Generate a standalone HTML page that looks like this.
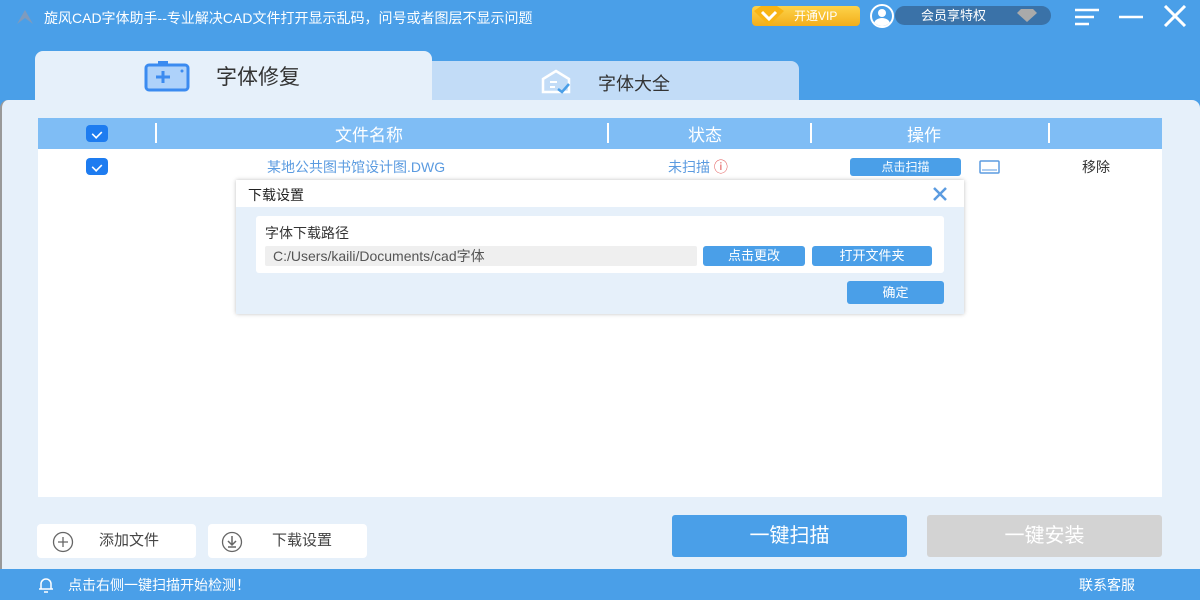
<!DOCTYPE html>
<html><head><meta charset="utf-8"><style>
*{margin:0;padding:0;box-sizing:border-box}
body{width:1200px;height:600px;overflow:hidden;background:#4a9fe8;font-family:"Liberation Sans","Noto Sans CJK SC",sans-serif;position:relative}
.a{position:absolute}
.title{left:44px;top:8px;color:#fff;font-size:14px}
.panel{left:0;top:100px;width:1200px;height:469px;background:#e6f0fa;border-radius:8px 8px 0 0;border-left:2px solid #999}
.tab1{left:35px;top:51px;width:397px;height:52px;background:#e6f0fa;border-radius:8px 8px 0 0}
.tab2{left:432px;top:61px;width:367px;height:39px;background:#c2dcf7;border-radius:0 8px 0 0}
.table{left:38px;top:118px;width:1124px;height:379px;background:#fff}
.thead{left:38px;top:118px;width:1124px;height:31px;background:#7fbdf5;color:#fff;font-size:17px}
.cb{width:22px;height:17px;background:#1e7cf0;border-radius:4px}
.cb:after{content:"";position:absolute;left:7px;top:3px;width:6px;height:9px;border:solid #fff;border-width:0 2px 2px 0;transform:rotate(45deg) scale(.8)}
.sep{width:2px;height:20px;background:#fff;top:5px}
.btn{background:#4a9fe8;color:#fff;border-radius:3px;text-align:center}
.foot{left:0;top:569px;width:1200px;height:31px;background:#4a9fe8;color:#fff;font-size:14px}
</style></head><body>
<svg class="a" style="left:15px;top:9px" width="20" height="16"><path d="M2 15L10 1L18 15L10 9Z" fill="#7f9bbd"/></svg>
<div class="a title">旋风CAD字体助手--专业解决CAD文件打开显示乱码，问号或者图层不显示问题</div>
<div class="a" style="left:752px;top:6px;width:108px;height:20px;background:linear-gradient(#fdd34a,#f3ae1b);border-radius:4px;color:#fff;font-size:12px;line-height:20px;padding-left:42px">开通VIP</div>
<svg class="a" style="left:752px;top:5px" width="34" height="22"><path d="M2 6L9 1L25 1L32 6L17 21Z" fill="#f8b414"/><path d="M10 7L17 14L24 7" stroke="#fff" stroke-width="3" fill="none"/></svg>
<div class="a" style="left:895px;top:6px;width:156px;height:19px;background:#3a72a8;border-radius:10px;color:#fff;font-size:13px;line-height:19px;padding-left:26px">会员享特权</div>
<svg class="a" style="left:1016px;top:9px" width="22" height="14"><path d="M1 4L5 0L17 0L21 4L11 13Z" fill="#aaa"/></svg>
<div class="a" style="left:870px;top:4px;width:24px;height:24px;border:2px solid #fff;border-radius:50%;background:#4a9fe8;overflow:hidden"><div class="a" style="left:6px;top:3px;width:8px;height:8px;border-radius:50%;background:#fff"></div><div class="a" style="left:2px;top:12px;width:16px;height:12px;border-radius:50%;background:#fff"></div></div>
<svg class="a" style="left:1074px;top:8px" width="26" height="18" stroke="#fff" stroke-width="2.5"><path d="M1 2H25M1 9H20M1 16H15"/></svg>
<svg class="a" style="left:1118px;top:8px" width="26" height="18" stroke="#fff" stroke-width="2.5"><path d="M1 9H25"/></svg>
<svg class="a" style="left:1163px;top:5px" width="24" height="22" stroke="#fff" stroke-width="3"><path d="M2 1L22 21M22 1L2 21"/></svg>
<div class="a panel"></div>
<div class="a tab2"></div>
<div class="a tab1"></div>
<svg class="a" style="left:144px;top:60px" width="48" height="32"><rect x="2" y="5" width="42" height="25" rx="3" fill="#aed2fa" stroke="#3b8bf0" stroke-width="3"/><rect x="14" y="1" width="10" height="3" fill="#3b8bf0"/><path d="M12 17H26M19 11V23" stroke="#3b8bf0" stroke-width="3"/><circle cx="38" cy="11" r="1.5" fill="#3b8bf0"/></svg>
<div class="a" style="left:216px;top:61px;font-size:21px;color:#333">字体修复</div>
<svg class="a" style="left:540px;top:69px" width="34" height="26"><path d="M3 10L16 2L29 10V23H3Z" fill="none" stroke="#fff" stroke-width="2.5"/><path d="M10 13H17M10 18H15" stroke="#fff" stroke-width="2"/><path d="M18 20L22 23L29 15" stroke="#4a9fe8" stroke-width="2.5" fill="none"/></svg>
<div class="a" style="left:598px;top:70px;font-size:18px;color:#333">字体大全</div>
<div class="a table"></div>
<div class="a thead">
<div class="a cb" style="left:48px;top:7px"></div>
<div class="a sep" style="left:117px"></div>
<div class="a" style="left:297px;top:3px">文件名称</div>
<div class="a sep" style="left:569px"></div>
<div class="a" style="left:650px;top:3px">状态</div>
<div class="a sep" style="left:772px"></div>
<div class="a" style="left:869px;top:3px">操作</div>
<div class="a sep" style="left:1010px"></div>
</div>
<div class="a cb" style="left:86px;top:158px"></div>
<div class="a" style="left:267px;top:157px;font-size:14px;color:#5b9be0">某地公共图书馆设计图.DWG</div>
<div class="a" style="left:668px;top:157px;font-size:14px;color:#5b9be0">未扫描 <span style="color:#e04c4c">ⓘ</span></div>
<div class="a btn" style="left:850px;top:158px;width:111px;height:18px;font-size:12px;line-height:18px">点击扫描</div>
<svg class="a" style="left:979px;top:160px" width="22" height="14"><rect x="1" y="1" width="19" height="12" rx="1" fill="none" stroke="#5b9be0" stroke-width="1.5"/><path d="M3 10H18" stroke="#5b9be0"/></svg>
<div class="a" style="left:1082px;top:157px;font-size:14px;color:#333">移除</div>
<div class="a" style="left:236px;top:180px;width:728px;height:134px;background:#e6f0fa;box-shadow:0 0 4px rgba(0,0,0,.25)">
<div class="a" style="left:0;top:0;width:728px;height:27px;background:#fff"></div>
<div class="a" style="left:12px;top:5px;font-size:14px;color:#222">下载设置</div>
<svg class="a" style="left:696px;top:6px" width="16" height="16" stroke="#5b9be0" stroke-width="2.5"><path d="M2 2L14 14M14 2L2 14"/></svg>
<div class="a" style="left:20px;top:36px;width:688px;height:57px;background:#fff;border-radius:3px"></div>
<div class="a" style="left:29px;top:43px;font-size:14px;color:#333">字体下载路径</div>
<div class="a" style="left:29px;top:66px;width:432px;height:20px;background:#efefef;border-radius:2px;font-size:14px;color:#555;line-height:20px;padding-left:8px">C:/Users/kaili/Documents/cad字体</div>
<div class="a btn" style="left:467px;top:66px;width:102px;height:20px;font-size:13px;line-height:20px">点击更改</div>
<div class="a btn" style="left:576px;top:66px;width:120px;height:20px;font-size:13px;line-height:20px">打开文件夹</div>
<div class="a btn" style="left:611px;top:101px;width:97px;height:23px;font-size:13px;line-height:23px">确定</div>
</div>
<div class="a" style="left:37px;top:524px;width:159px;height:34px;background:#fff;border-radius:4px;font-size:15px;color:#444;line-height:34px;padding-left:62px">添加文件</div>
<svg class="a" style="left:52px;top:531px" width="22" height="22"><circle cx="11" cy="11" r="9.5" fill="none" stroke="#666" stroke-width="1.3"/><path d="M6 11H16M11 6V16" stroke="#666" stroke-width="1.3"/></svg>
<div class="a" style="left:208px;top:524px;width:159px;height:34px;background:#fff;border-radius:4px;font-size:15px;color:#444;line-height:34px;padding-left:64px">下载设置</div>
<svg class="a" style="left:221px;top:531px" width="22" height="22"><circle cx="11" cy="11" r="9.5" fill="none" stroke="#666" stroke-width="1.3"/><path d="M11 5V13M7 10L11 14L15 10M7 16H15" stroke="#666" stroke-width="1.5" fill="none"/></svg>
<div class="a btn" style="left:672px;top:515px;width:235px;height:42px;font-size:20px;line-height:42px;border-radius:3px">一键扫描</div>
<div class="a" style="left:927px;top:515px;width:235px;height:42px;font-size:20px;line-height:42px;text-align:center;background:#d3d3d3;color:#fff;border-radius:3px">一键安装</div>
<div class="a foot">
<svg class="a" style="left:38px;top:7px" width="16" height="18"><path d="M3 13V8A5 5 0 0 1 13 8V13H15H1Z" fill="none" stroke="#fff" stroke-width="1.5"/><path d="M6 16H10" stroke="#fff" stroke-width="1.5"/></svg>
<div class="a" style="left:68px;top:6px">点击右侧一键扫描开始检测！</div>
<div class="a" style="left:1079px;top:6px">联系客服</div>
</div>
</body></html>
